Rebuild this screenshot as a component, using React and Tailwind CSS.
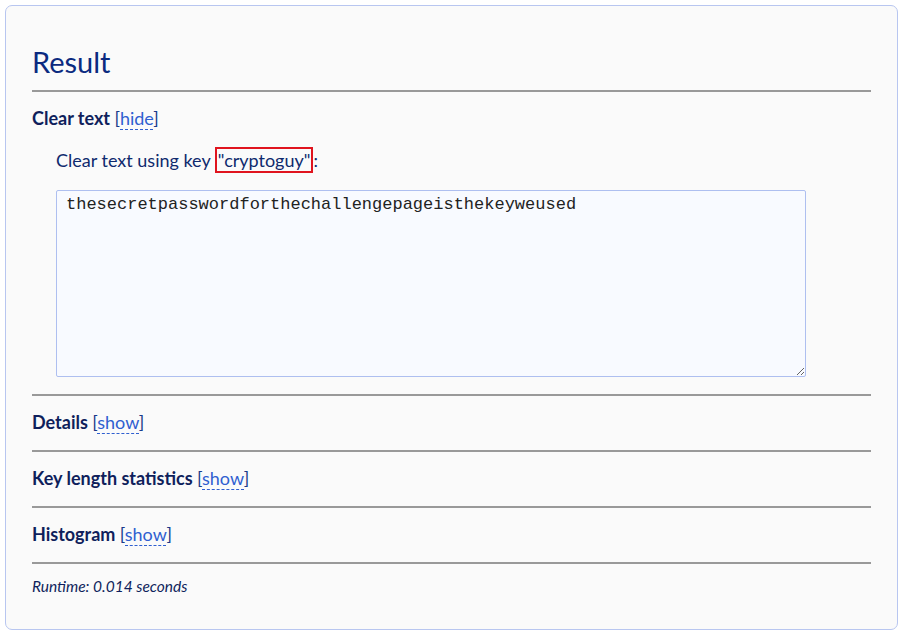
export default function App() {
  const Section = ({ title, action }) => (
    <div className="border-t-2 border-t-[#999] pt-[13px] pb-[14px]">
      <div className="text-[18px] leading-[27px] font-bold text-[#0f1f5c]">
        {title} <span className="font-normal text-[#1a3a8a]">[<span className="text-[#2f5fd0] border-b border-dashed border-[#2f5fd0]">{action}</span>]</span>
      </div>
    </div>
  );
  return (
    <div className="w-[903px] h-[636px] bg-white p-[5px] font-['Source_Sans_Pro','Lato',sans-serif]">
      <div className="h-[625px] rounded-[7px] border border-[#b8c6f0] bg-[#fafafa] px-[26px]">
        <h1 className="mt-[38px] text-[29px] leading-[36px] text-[#0b2a80] pb-[10px]">Result</h1>
        <div className="border-t-2 border-t-[#999] pt-[13px] pb-[17px]">
          <div className="text-[18px] leading-[27px] font-bold text-[#0f1f5c]">
            Clear text <span className="font-normal text-[#1a3a8a]">[<span className="text-[#2f5fd0] border-b border-dashed border-[#2f5fd0]">hide</span>]</span>
          </div>
          <div className="pl-[24px] mt-[15px] text-[18px] leading-[27px] text-[#0f2a6e]">
            Clear text using key <span className="border-2 border-[#e0141e] px-[1px]">"cryptoguy"</span>:
          </div>
          <div className="pl-[24px] mt-[16px]">
            <textarea
              readOnly
              className="block w-[750px] h-[187px] border border-[#aebff0] rounded-[2px] bg-[#f8faff] px-[9px] py-[3px] text-[17px] leading-[22px] text-[#222] font-['Liberation_Mono',monospace] resize-y outline-none"
              defaultValue="thesecretpasswordforthechallengepageisthekeyweused"
            />
          </div>
        </div>
        <Section title="Details" action="show" />
        <Section title="Key length statistics" action="show" />
        <Section title="Histogram" action="show" />
        <div className="border-t-2 border-t-[#999] pt-[11px] text-[15.5px] leading-[23px] italic text-[#0f1f5c]">
          Runtime: 0.014 seconds
        </div>
      </div>
    </div>
  );
}
